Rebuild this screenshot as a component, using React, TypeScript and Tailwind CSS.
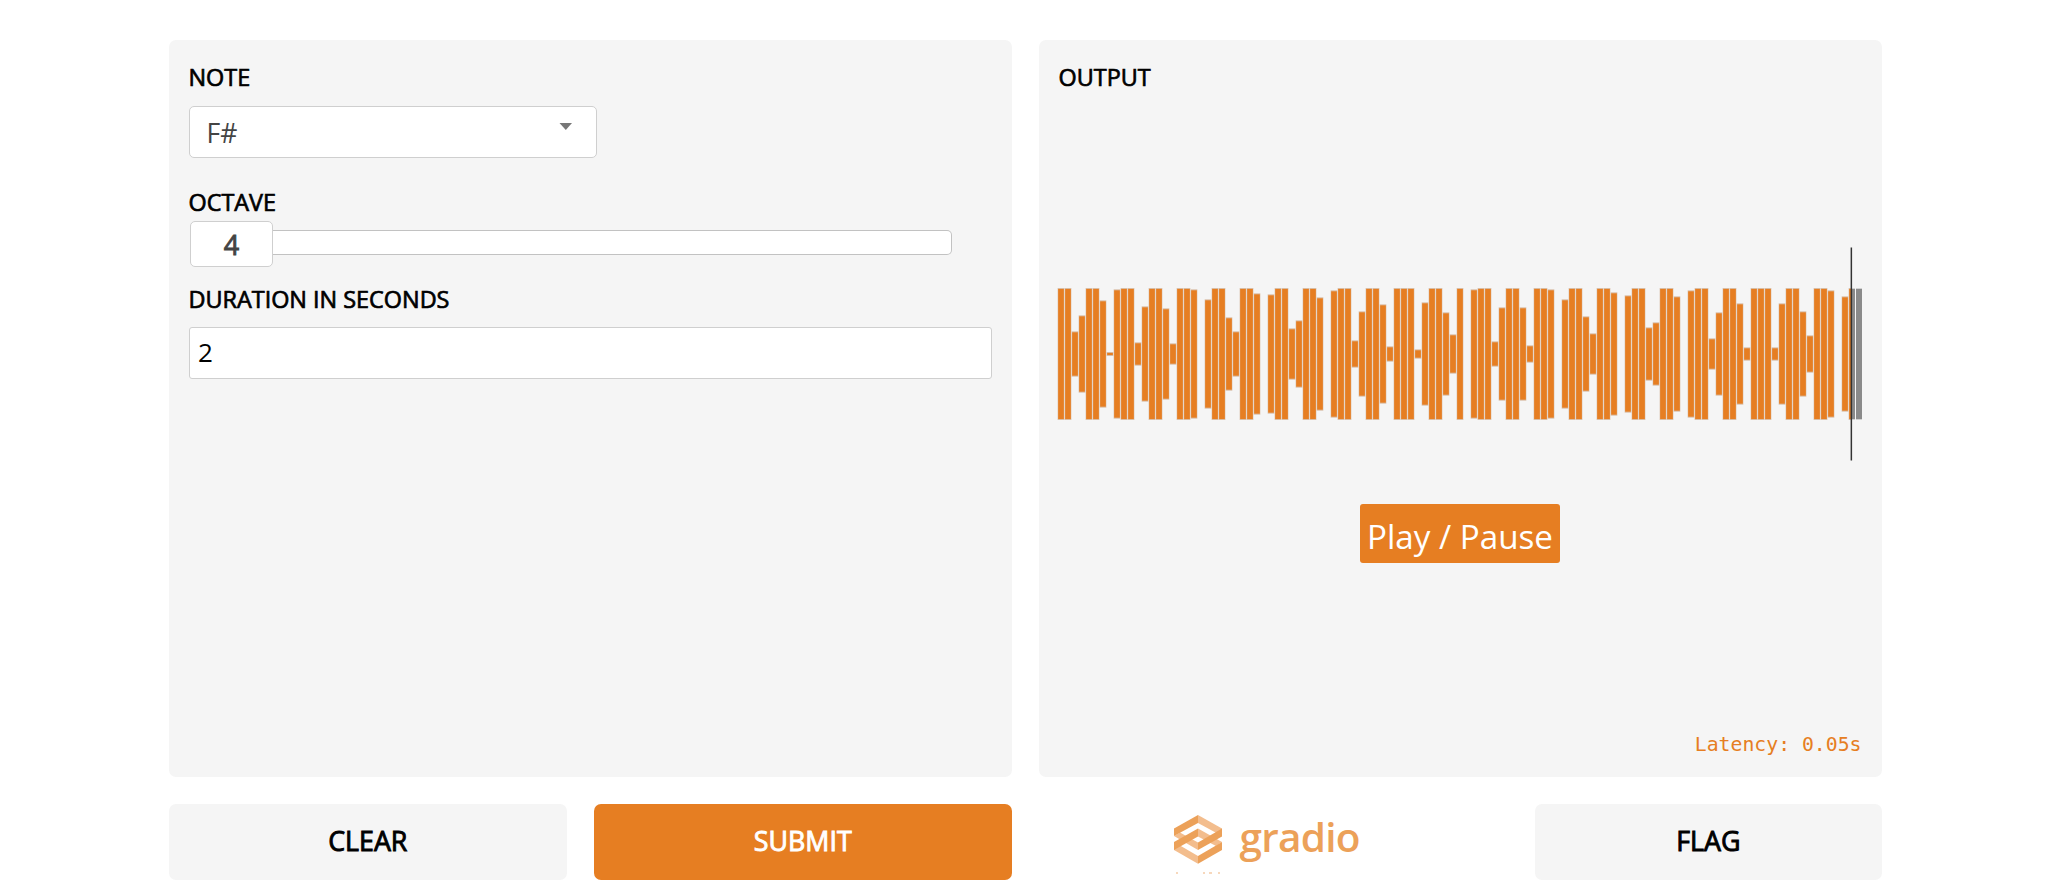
import React from "react";

const FULL = 196;
// Half-heights of the waveform peaks, in thirds of a pixel.
const peaks: number[] = [
  196, 196, 66, 114, 196, 196, 159, 4, 192, 196, 196, 33, 141, 196, 196, 135, 30, 196, 196, 192,
  0, 162, 196, 196, 108, 66, 196, 196, 180, 0, 177, 196, 196, 75, 99, 196, 196, 168, 0, 189,
  196, 196, 39, 126, 196, 196, 147, 21, 196, 196, 196, 12, 153, 196, 196, 123, 57, 196, 0, 192,
  196, 196, 36, 138, 196, 196, 138, 24, 196, 196, 192, 0, 162, 196, 196, 111, 60, 196, 196, 183,
  0, 174, 196, 196, 78, 93, 196, 196, 171, 0, 189, 196, 196, 45, 123, 196, 196, 150, 18, 196,
  196, 196, 18, 150, 196, 196, 126, 54, 196, 196, 189, 0, 171, 196, 196,
];

function Bars({ fill, grow }: { fill: string; grow: number }) {
  return (
    <g fill={fill}>
      {peaks.map((p, i) => {
        if (p === 0) return null;
        const half = (Math.min(p, FULL) + grow) / 3;
        return <rect key={i} x={i * 7 - grow / 6} y={107 - half} width={6 + grow / 3} height={half * 2} />;
      })}
    </g>
  );
}

function Waveform() {
  return (
    <svg className="block h-[214px] w-[803px] overflow-visible" viewBox="1 0 803 214">
      <defs>
        <clipPath id="played">
          <rect x="-1" y="0" width="794" height="214" />
        </clipPath>
        <clipPath id="rest">
          <rect x="793" y="0" width="12" height="214" />
        </clipPath>
      </defs>
      <g clipPath="url(#rest)">
        <Bars fill="#8a8a8a" grow={0} />
      </g>
      <g clipPath="url(#played)">
        <Bars fill="#d9bda4" grow={2} />
        <Bars fill="#e67e22" grow={-1} />
      </g>
      <rect x="792.6" y="0.5" width="1.5" height="213" fill="#333" />
    </svg>
  );
}

function Label({ children }: { children: React.ReactNode }) {
  return <div className="text-[23.4px] leading-[32px] text-black [-webkit-text-stroke:0.7px_#000]">{children}</div>;
}

function Logo() {
  return (
    <svg className="block h-[60px] w-[190px] overflow-visible" viewBox="0 0 190 60">
      <g>
        <path d="M24 0 48 13.5V21L24 8Z" fill="#f3bd8d" />
        <path d="M0 21 6 17.5 24 27.5V35Z" fill="#f3bd8d" />
        <path d="M24 13.5 48 27 42 31 24 21.5Z" fill="#f3bd8d" />
        <path d="M0 27V35L24 48.7V41Z" fill="#f3bd8d" />
        <path d="M24 0V8L0 21V13.5Z" fill="#eca159" />
        <path d="M24 13.5V21.5L0 35V27Z" fill="#eca159" />
        <path d="M48 13.5V21.5L24 35V27.5Z" fill="#eca159" />
        <path d="M48 27V35L24 48.7V41Z" fill="#eca159" />
        <g fill="#efb27a">
          <rect x="2" y="57.5" width="2" height="1" />
          <rect x="29" y="57.5" width="2" height="1" />
          <rect x="35" y="57.5" width="3" height="1" />
          <rect x="44" y="57.5" width="2" height="1" />
        </g>
      </g>
      <text x="65.5" y="37" fill="#eca159" fontSize="40.5" fontWeight="600" textLength="121">
        gradio
      </text>
    </svg>
  );
}

export default function App() {
  return (
    <div className="h-[881px] w-full overflow-hidden bg-white font-['Open_Sans',sans-serif]">
      <div className="mx-auto flex w-[1713px] flex-col gap-[27px] pt-10">
        <div className="flex gap-[27px]">
          <section className="h-[737px] flex-1 rounded-[7px] bg-[#f5f5f5] px-5 pt-[21px]">
            <Label>NOTE</Label>
            <div className="mt-[12.5px] flex h-[52px] w-[408px] items-center justify-between rounded-[5px] border border-[#cfcfcf] bg-white pr-[23px] pl-[17px] text-[26.6px] text-[#444]">
              <span className="pt-[4px]">F#</span>
              <svg className="mb-[10px] h-[7px] w-[14px]" viewBox="0 0 14 7">
                <path d="M0.5 0H13L6.8 7Z" fill="#777" />
              </svg>
            </div>
            <div className="mt-[28px]">
              <Label>OCTAVE</Label>
            </div>
            <div className="mt-[3.5px] flex h-[46px] items-center pl-[1.5px]">
              <div className="flex h-[46px] w-[83px] items-center justify-center rounded-[5px] border border-[#cfcfcf] bg-white pt-[2px] text-[27px] text-[#444] [-webkit-text-stroke:0.9px_#444]">
                4
              </div>
              <div className="mb-[3px] h-[25px] w-[679px] rounded-r-[5px] border border-l-0 border-[#c2c2c2] bg-white" />
            </div>
            <div className="mt-[16px]">
              <Label>DURATION IN SECONDS</Label>
            </div>
            <div className="mt-[11.5px] flex h-[52px] items-center rounded-[3px] border border-[#cfcfcf] bg-white pl-[8.5px] text-[26px] text-black">
              2
            </div>
          </section>
          <section className="flex h-[737px] flex-1 flex-col rounded-[7px] bg-[#f5f5f5] px-5 pt-[21px]">
            <Label>OUTPUT</Label>
            <div className="mt-[154px]">
              <Waveform />
            </div>
            <button className="mt-[43px] h-[59px] w-[200px] self-center rounded-[3px] bg-[#e67e22] pt-[6px] text-[33.2px] leading-[53px] whitespace-nowrap text-white">
              Play / Pause
            </button>
            <div className="mt-auto mb-[19px] self-end font-['DejaVu_Sans_Mono',monospace] text-[19.8px] leading-[26px] text-[#e67e22]">
              Latency: 0.05s
            </div>
          </section>
        </div>
        <div className="flex h-[76px]">
          <button className="w-[398.5px] rounded-[7px] bg-[#f5f5f5] pb-[2px] text-[26.8px] text-black [-webkit-text-stroke:0.9px_#000]">
            CLEAR
          </button>
          <button className="ml-[27px] w-[417.5px] rounded-[7px] bg-[#e67e22] pb-[2px] text-[26.8px] text-white [-webkit-text-stroke:0.9px_#fff]">
            SUBMIT
          </button>
          <div className="flex flex-1 pt-[11px] pl-[162.5px]">
            <Logo />
          </div>
          <button className="w-[346.5px] rounded-[7px] bg-[#f5f5f5] pb-[2px] text-[26.8px] text-black [-webkit-text-stroke:0.9px_#000]">
            FLAG
          </button>
        </div>
      </div>
    </div>
  );
}
